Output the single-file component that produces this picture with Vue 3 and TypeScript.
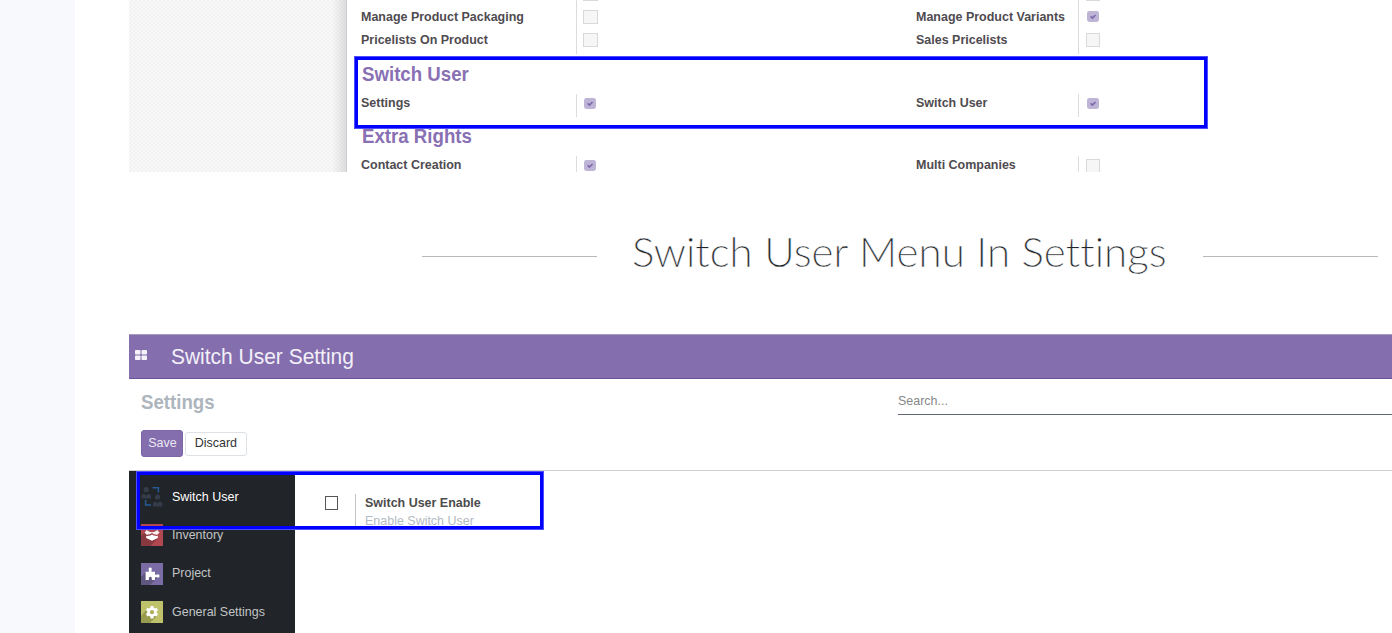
<script setup lang="ts">
interface Right { label: string; on: boolean }
interface Group { title?: string; rows: [Right, Right][] }

const groups: Group[] = [
  {
    rows: [
      [{ label: '', on: false }, { label: '', on: false }],
      [{ label: 'Manage Product Packaging', on: false }, { label: 'Manage Product Variants', on: true }],
      [{ label: 'Pricelists On Product', on: false }, { label: 'Sales Pricelists', on: false }],
    ],
  },
  { title: 'Switch User', rows: [[{ label: 'Settings', on: true }, { label: 'Switch User', on: true }]] },
  { title: 'Extra Rights', rows: [[{ label: 'Contact Creation', on: true }, { label: 'Multi Companies', on: false }]] },
]

const apps = [
  { id: 'switch', label: 'Switch User' },
  { id: 'inventory', label: 'Inventory' },
  { id: 'project', label: 'Project' },
  { id: 'general', label: 'General Settings' },
]
</script>

<template>
  <div class="page">
    <div class="gutter"></div>
    <main class="content">
      <section class="shot rights">
        <div class="backdrop"></div>
        <div class="sheet">
          <div v-for="(g, i) in groups" :key="i" class="group">
            <h3 v-if="g.title" class="gtitle narrow">{{ g.title }}</h3>
            <div v-for="(row, r) in g.rows" :key="r" class="row">
              <template v-for="(cell, c) in row" :key="c">
                <span class="label narrow">{{ cell.label }}</span>
                <span class="value" :class="{ second: c === 1 }">
                  <svg v-if="cell.on" class="tick" viewBox="0 0 12 11">
                    <rect width="12" height="11" rx="2.4" fill="#bdb4d6" />
                    <path d="M3.6 5.4 L5.4 7 L8.6 4" fill="none" stroke="#8068ad" stroke-width="1.7" />
                  </svg>
                  <i v-else class="box"></i>
                </span>
              </template>
            </div>
          </div>
        </div>
        <div class="frame frame-rights"></div>
      </section>

      <div class="heading">
        <span class="rule"></span>
        <h2>Switch User Menu In Settings</h2>
        <span class="rule"></span>
      </div>

      <section class="shot settings">
        <header class="bar">
          <svg class="grid" viewBox="0 0 12 10" fill="#f4f1f8">
            <rect width="5.5" height="4.5" rx=".8" /><rect x="6.5" width="5.5" height="4.5" rx=".8" />
            <rect y="5.5" width="5.5" height="4.5" rx=".8" /><rect x="6.5" y="5.5" width="5.5" height="4.5" rx=".8" />
          </svg>
          <span class="bartitle narrow">Switch User Setting</span>
        </header>
        <div class="control">
          <div class="left">
            <div class="crumb narrow">Settings</div>
            <div class="buttons">
              <button class="save"><span>Save</span></button>
              <button class="discard"><span>Discard</span></button>
            </div>
          </div>
          <div class="search"><span class="narrow">Search...</span></div>
        </div>
        <div class="body">
          <nav class="side">
            <div v-for="(a, i) in apps" :key="a.id" class="app" :class="{ active: i === 0 }">
              <svg v-if="a.id === 'switch'" class="icon" viewBox="0 0 22 22">
                <g fill="#343c4b">
                  <circle cx="5.2" cy="3.7" r="2.6" />
                  <path d="M.5 12.5V10Q.7 8.4 3 7.8L5.2 9.4 7.6 7.8Q9.8 8.4 10 10V12.5Z" />
                  <circle cx="16.5" cy="11" r="2.6" />
                  <path d="M12 20.5V17.6Q12.2 16 14.2 15.4L16.5 17 18.9 15.4Q21 16 21.2 17.6V20.5Z" />
                </g>
                <path d="M11.5 1.8H17.4V6.5M4.6 14v4.9H10" fill="none" stroke="#255b96" stroke-width="1.5" />
              </svg>
              <svg v-else-if="a.id === 'inventory'" class="icon" viewBox="0 0 22 22">
                <rect width="22" height="22" fill="#b1474f" />
                <path d="M0 12L5 7 17 14 9.5 22H0Z" fill="#87393f" />
                <path d="M3.5 8.8L5.6 6Q8.5 8.2 11 8.2T16.4 6L18.5 8.8 16.2 10.8Q13.4 11 11 9 8.6 11 5.8 10.8Z" fill="#f8efef" />
                <path d="M5.2 11.8Q9.2 12.2 11 10.5 12.8 12.2 16.8 11.8V14L11 16.8 5.2 14Z" fill="#fff" />
              </svg>
              <svg v-else-if="a.id === 'project'" class="icon" viewBox="0 0 22 22">
                <rect width="22" height="22" fill="#7a6da6" />
                <path d="M0 14L5 9 17 14 9 22H0Z" fill="#5f577f" />
                <path d="M4.6 8.8H7.9V7.2Q6.9 4.6 9.2 4.6 11.5 4.6 10.5 7.2V8.8H14V11.7H15.5Q18.5 10.4 18.5 13 18.5 15.4 15.5 14.2H14V17H10.8V14.7Q9.3 12.6 7.9 14.7V17H4.6Z" fill="#fff" />
              </svg>
              <svg v-else class="icon" viewBox="0 0 22 22">
                <rect width="22" height="22" fill="#bfc16b" />
                <path d="M0 15L6 8 16 15 9 22H0Z" fill="#999c50" />
                <g fill="#fff">
                  <circle cx="11" cy="11.2" r="4.7" />
                  <rect v-for="k in 3" :key="k" x="9.4" y="5" width="3.2" height="12.4" rx=".7" :transform="`rotate(${k * 60} 11 11.2)`" />
                </g>
                <circle cx="11" cy="11.2" r="2.1" fill="#aeb05d" />
              </svg>
              <span class="narrow">{{ a.label }}</span>
            </div>
          </nav>
          <div class="option">
            <i class="check"></i>
            <div class="desc">
              <b class="narrow">Switch User Enable</b>
              <span class="narrow">Enable Switch User</span>
            </div>
          </div>
        </div>
        <div class="frame frame-settings"></div>
      </section>
    </main>
  </div>
</template>

<style>
body { margin: 0; overflow: hidden; background: #fff; }
</style>

<style scoped>
* { box-sizing: border-box; }
.page { display: flex; width: 1392px; height: 633px; overflow: hidden; font-family: "Liberation Sans", Arial, sans-serif; }
.gutter { flex: 0 0 75px; background: #f8f9fc; }
.content { flex: 1; min-width: 0; padding-left: 54px; }
.narrow { display: inline-block; transform: scaleX(.924); transform-origin: 0 50%; }
.shot { position: relative; overflow: hidden; }
.rights { display: flex; height: 172px; }
.backdrop {
  flex: 0 0 217px;
  background:
    linear-gradient(90deg, transparent 203px, rgba(0, 0, 0, .1) 217px),
    repeating-conic-gradient(#f2f2f2 0 25%, #f8f8f8 0 50%) 0 0 / 4px 4px;
}
.sheet { flex: 1; padding-left: 14px; border-left: 1px solid #cdcdd5; margin-top: -15px; }
.row { display: grid; grid-template-columns: 215px 340px 162px 1fr; height: 23px; align-items: center; }
.group:first-child { padding-bottom: 1px; }
.group:first-child .row:last-child { height: 24px; }
.group:first-child .row:first-child { height: 22px; }
.label { justify-self: start; font-size: 13.5px; line-height: 15px; font-weight: bold; color: #4f4b50; white-space: nowrap; margin-top: -4px; }
.row:last-child .label { margin-top: -6px; }
.value { display: flex; align-items: center; align-self: stretch; border-left: 1px solid #dcdcdc; padding: 0 0 4px 6px; }
.value.second { padding-left: 7px; }
.box { width: 15px; height: 14px; border: 1px solid #d9d9d9; background: #f6f6f6; }
.second .box { width: 14px; }
.tick { width: 12px; height: 11px; margin-left: 1px; }
.gtitle { display: block; margin: 0 0 0 1px; height: 39px; padding-top: 7px; font-size: 20.2px; line-height: 24px; color: #8870b3; white-space: nowrap; }
.frame { position: absolute; border: 3px solid #00f; outline: 1px solid rgba(130, 130, 255, .6); outline-offset: -1px; }
.frame-rights { left: 225px; top: 56px; width: 854px; height: 73px; border-width: 4px; }

.heading { display: flex; align-items: center; gap: 36px; height: 162px; padding-left: 293px; }
.heading h2 { flex: none; width: 534px; margin: 0; font: 300 42px/50px Lato, sans-serif; color: #212529; white-space: nowrap; padding-bottom: 4px; margin-left: -1px; margin-right: 1px; font-variant-ligatures: none; letter-spacing: .06px; -webkit-text-stroke: .4px #fff; }
.rule { flex: 0 0 175px; height: 1px; background: #b9b9b9; margin-top: 7px; }

.settings { height: 299px; }
.bar { display: flex; align-items: center; height: 45px; padding-left: 6px; background: #846eae; border-top: 1px solid #a79bbc; border-bottom: 1px solid #6a5299; }
.grid { width: 12px; height: 10px; margin-top: -3px; }
.bartitle { margin: -2px 0 0 24px; font-size: 22.7px; line-height: 26px; color: #f3f0f8; white-space: nowrap; }
.control { display: flex; height: 92px; border-bottom: 1px solid #cfcfcf; }
.left { width: 769px; padding: 11px 0 0 12px; }
.crumb { display: block; font-size: 20.2px; line-height: 24px; font-weight: bold; color: #adb5bd; }
.buttons { display: flex; align-items: center; gap: 2px; margin-top: 16px; }
button { font: 13.5px/15px "Liberation Sans", Arial, sans-serif; border-radius: 3px; padding: 0 0 2px; text-align: center; }
button span { display: inline-block; transform: scaleX(.924); margin: 0 -4px; }
.save { width: 42px; height: 27px; border: 1px solid #7c66a6; background: #846eae; color: #ece7f4; }
.discard { width: 62px; height: 24px; border: 1px solid #dee2e6; background: #fff; color: #333; }
.search { flex: 1; height: 36px; border-bottom: 1px solid #5f666d; font-size: 13.5px; line-height: 15px; color: #878787; padding-top: 14px; }
.body { display: flex; height: 162px; }
.side { width: 166px; background: #212529; padding-top: 7px; }
.app { display: flex; align-items: center; height: 38.3px; padding-left: 12px; font-size: 13.5px; color: #c2c4c6; white-space: nowrap; }
.app span { margin-top: -2px; }
.app.active { color: #fff; }
.icon { width: 22px; height: 22px; margin-right: 9px; }
.option { display: flex; padding: 23px 0 0 30px; }
.check { width: 13px; height: 14px; margin-top: 2px; border: 1px solid #555; background: #fff; }
.desc { display: flex; flex-direction: column; margin-left: 17px; height: 36px; border-left: 1px solid #c4c4c4; padding-left: 9px; font-size: 13.5px; line-height: 18px; white-space: nowrap; }
.desc b { color: #4c4c4c; }
.desc span { color: #b4bbc2; }
.frame-settings { left: 7px; top: 137px; width: 408px; height: 59px; border-width: 4px; }
</style>
